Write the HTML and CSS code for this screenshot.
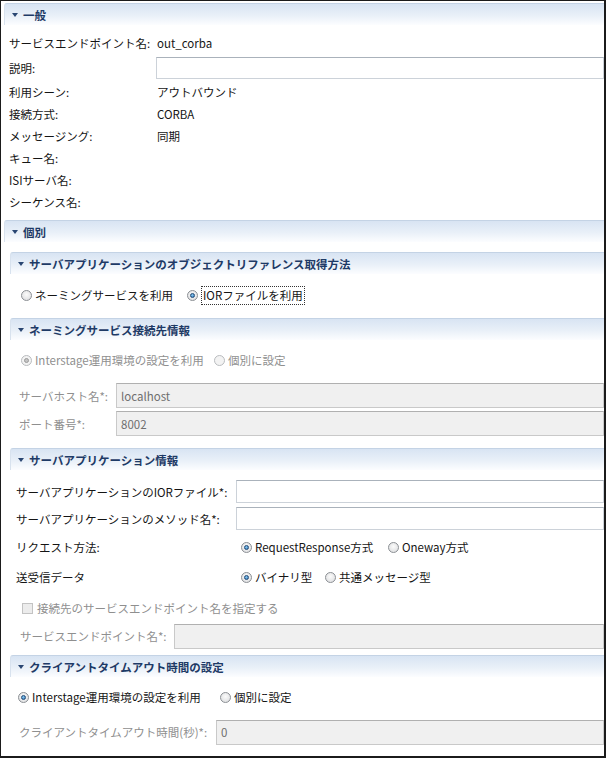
FILE: index.html
```html
<!DOCTYPE html>
<html lang="ja">
<head>
    <meta charset="UTF-8">
    <title>サービスエンドポイント</title>
    <link rel="stylesheet" href="styles.css">
</head>
<body>
    <div class="editor">
        <!-- 一般 -->
        <section class="sec">
            <div class="sec-head"><span class="twisty"></span>一般</div>
            <div class="general">
                <div class="row"><span class="lbl">サービスエンドポイント名:</span><span>out_corba</span></div>
                <div class="row row-desc"><span class="lbl">説明:</span><span class="field"></span></div>
                <div class="row"><span class="lbl">利用シーン:</span><span>アウトバウンド</span></div>
                <div class="row"><span class="lbl">接続方式:</span><span>CORBA</span></div>
                <div class="row"><span class="lbl">メッセージング:</span><span>同期</span></div>
                <div class="row"><span class="lbl">キュー名:</span></div>
                <div class="row"><span class="lbl">ISIサーバ名:</span></div>
                <div class="row"><span class="lbl">シーケンス名:</span></div>
            </div>
        </section>

        <!-- 個別 -->
        <section class="sec">
            <div class="sec-head"><span class="twisty"></span>個別</div>
            <div class="sec-wrap">

                <section class="sub">
                    <div class="sec-head"><span class="twisty"></span>サーバアプリケーションのオブジェクトリファレンス取得方法</div>
                    <div class="sub-body sub-ref">
                        <div class="choice">
                            <label class="opt w-166"><span class="radio"></span>ネーミングサービスを利用</label>
                            <label class="opt"><span class="radio on"></span><span class="focus">IORファイルを利用</span></label>
                        </div>
                    </div>
                </section>

                <section class="sub">
                    <div class="sec-head"><span class="twisty"></span>ネーミングサービス接続先情報</div>
                    <div class="sub-body sub-naming">
                        <div class="choice off indent2">
                            <label class="opt w-193"><span class="radio on"></span>Interstage運用環境の設定を利用</label>
                            <label class="opt"><span class="radio"></span>個別に設定</label>
                        </div>
                        <div class="frow first off">
                            <span class="lbl w-97">サーバホスト名*:</span>
                            <span class="field dis">localhost</span>
                        </div>
                        <div class="frow off">
                            <span class="lbl w-97">ポート番号*:</span>
                            <span class="field dis">8002</span>
                        </div>
                    </div>
                </section>

                <section class="sub">
                    <div class="sec-head"><span class="twisty"></span>サーバアプリケーション情報</div>
                    <div class="sub-body sub-app">
                        <div class="frow tight">
                            <span class="lbl w-220">サーバアプリケーションのIORファイル*:</span>
                            <span class="field"></span>
                        </div>
                        <div class="frow tight">
                            <span class="lbl w-220">サーバアプリケーションのメソッド名*:</span>
                            <span class="field"></span>
                        </div>
                        <div class="orow">
                            <span class="lbl w-225">リクエスト方法:</span>
                            <label class="opt w-147"><span class="radio on"></span>RequestResponse方式</label>
                            <label class="opt"><span class="radio"></span>Oneway方式</label>
                        </div>
                        <div class="orow">
                            <span class="lbl w-225">送受信データ</span>
                            <label class="opt w-84"><span class="radio on"></span>バイナリ型</label>
                            <label class="opt"><span class="radio"></span>共通メッセージ型</label>
                        </div>
                        <div class="orow off check-row">
                            <span class="check"></span>接続先のサービスエンドポイント名を指定する
                        </div>
                        <div class="frow ep off">
                            <span class="lbl w-154">サービスエンドポイント名*:</span>
                            <span class="field dis"></span>
                        </div>
                    </div>
                </section>

                <section class="sub">
                    <div class="sec-head"><span class="twisty"></span>クライアントタイムアウト時間の設定</div>
                    <div class="sub-body sub-timeout">
                        <div class="choice">
                            <label class="opt w-202"><span class="radio on"></span>Interstage運用環境の設定を利用</label>
                            <label class="opt"><span class="radio"></span>個別に設定</label>
                        </div>
                        <div class="frow first to off">
                            <span class="lbl w-197">クライアントタイムアウト時間(秒)*:</span>
                            <span class="field dis">0</span>
                        </div>
                    </div>
                </section>

            </div>
        </section>
    </div>
</body>
</html>
```

FILE: styles.css
```css
body {
    margin: 0;
    background: #fff;
    font-family: "Noto Sans CJK JP", "Noto Sans", sans-serif;
    font-size: 11.5px;
    line-height: 16px;
    color: #151515;
}

.editor {
    width: 606px;
    height: 758px;
    box-sizing: border-box;
    border-style: solid;
    border-color: #1b1b1b;
    border-width: 1px 2px 2px 1px;
    padding: 2px 0 0 3px;
    overflow: hidden;
}

/* section headers */
.sec-head {
    height: 22px;
    box-sizing: border-box;
    display: flex;
    align-items: center;
    padding-left: 7px;
    border-top: 1px solid #c4d3e5;
    border-left: 1px solid #d8e2ee;
    border-radius: 3px 0 0 0;
    background: linear-gradient(#d8e4f3, #e9f0f8 55%, #fcfdff);
    color: #1e3a66;
    font-weight: bold;
    white-space: nowrap;
}

.twisty {
    width: 0;
    height: 0;
    border-left: 3.5px solid transparent;
    border-right: 3.5px solid transparent;
    border-top: 4px solid #2a4672;
    margin-right: 5px;
    flex: none;
}

.general {
    padding: 7px 0 7px 5px;
}

.row {
    display: flex;
    align-items: center;
    height: 22px;
}

.row-desc {
    height: 27px;
}

.lbl {
    flex: none;
    width: 148px;
    white-space: nowrap;
}

.field {
    flex: 1;
    height: 22px;
    box-sizing: border-box;
    border: 1px solid #ccd2d9;
    border-top-color: #aab2bb;
    background: #fff;
    padding-left: 4px;
    display: flex;
    align-items: center;
    color: #6e6e6e;
}

.row-desc .field {
    margin-left: -1px;
}

.field.dis {
    background: #f0f0f0;
    border-color: #c9c9c9;
    border-top-color: #b0b0b0;
}

.sec-wrap {
    padding: 10px 0 0 6px;
}

/* subsection bodies */
.sub-body {
    padding-bottom: 11px;
}

.sub-ref {
    padding: 10px 0 12px 11px;
}

.sub-naming {
    padding: 9px 0 11px 9px;
}

.sub-app {
    padding: 8px 0 6px 6px;
}

.sub-timeout {
    padding: 9px 0 0 8px;
}

.choice {
    display: flex;
    align-items: center;
    height: 22px;
}

.indent2 {
    padding-left: 2px;
}

.opt {
    display: inline-flex;
    align-items: center;
    flex: none;
    white-space: nowrap;
}

.w-166 { width: 166px; }
.w-193 { width: 193px; }
.w-202 { width: 202px; }
.w-147 { width: 147px; }
.w-84 { width: 84px; }
.w-97 { width: 97px; }
.w-154 { width: 154px; }
.w-197 { width: 197px; }
.w-220 { width: 220px; }
.w-225 { width: 225px; }

.radio {
    position: relative;
    width: 11px;
    height: 11px;
    box-sizing: border-box;
    border-radius: 50%;
    border: 1px solid #8b8f94;
    background: radial-gradient(circle at 50% 40%, #fbfbfb, #d9dadc);
    margin-right: 3px;
    flex: none;
}

.radio.on::after {
    content: "";
    position: absolute;
    left: 2px;
    top: 2px;
    width: 5px;
    height: 5px;
    box-sizing: border-box;
    border-radius: 50%;
    border: 1px solid #1f4a78;
    background: radial-gradient(circle at 40% 35%, #8fd0f5, #2a6db0);
}

.focus {
    border: 1px dotted #333;
    padding: 0 1px;
    line-height: 17px;
}

.frow {
    display: flex;
    align-items: center;
    height: 27px;
    margin-top: 1px;
}

.frow .field {
    height: 25px;
}

.frow.first {
    margin-top: 11px;
}

.frow.tight {
    margin-top: 0;
}

.frow.tight .field {
    height: 23px;
}

.frow.to {
    height: 28px;
    margin-top: 10px;
}

.frow.to .lbl {
    padding-left: 1px;
    box-sizing: border-box;
    width: 198px;
}

.orow {
    display: flex;
    align-items: center;
    height: 30px;
}

.check-row {
    padding-left: 6px;
    margin-top: 1px;
}

.check {
    width: 11px;
    height: 11px;
    box-sizing: border-box;
    border: 1px solid #c3c3c3;
    background: #ececec;
    margin-right: 4px;
    flex: none;
}

.frow.ep {
    height: 26px;
    margin-top: 0;
    padding-left: 4px;
}

.frow.ep .field {
    height: 25px;
}

/* disabled look */
.off,
.off .lbl {
    color: #8f8f8f;
}

.off .radio {
    border-color: #b9bcbf;
    background: #f3f3f3;
}

.off .radio.on::after {
    border-color: #9a9a9a;
    background: #c4c4c4;
}
```
